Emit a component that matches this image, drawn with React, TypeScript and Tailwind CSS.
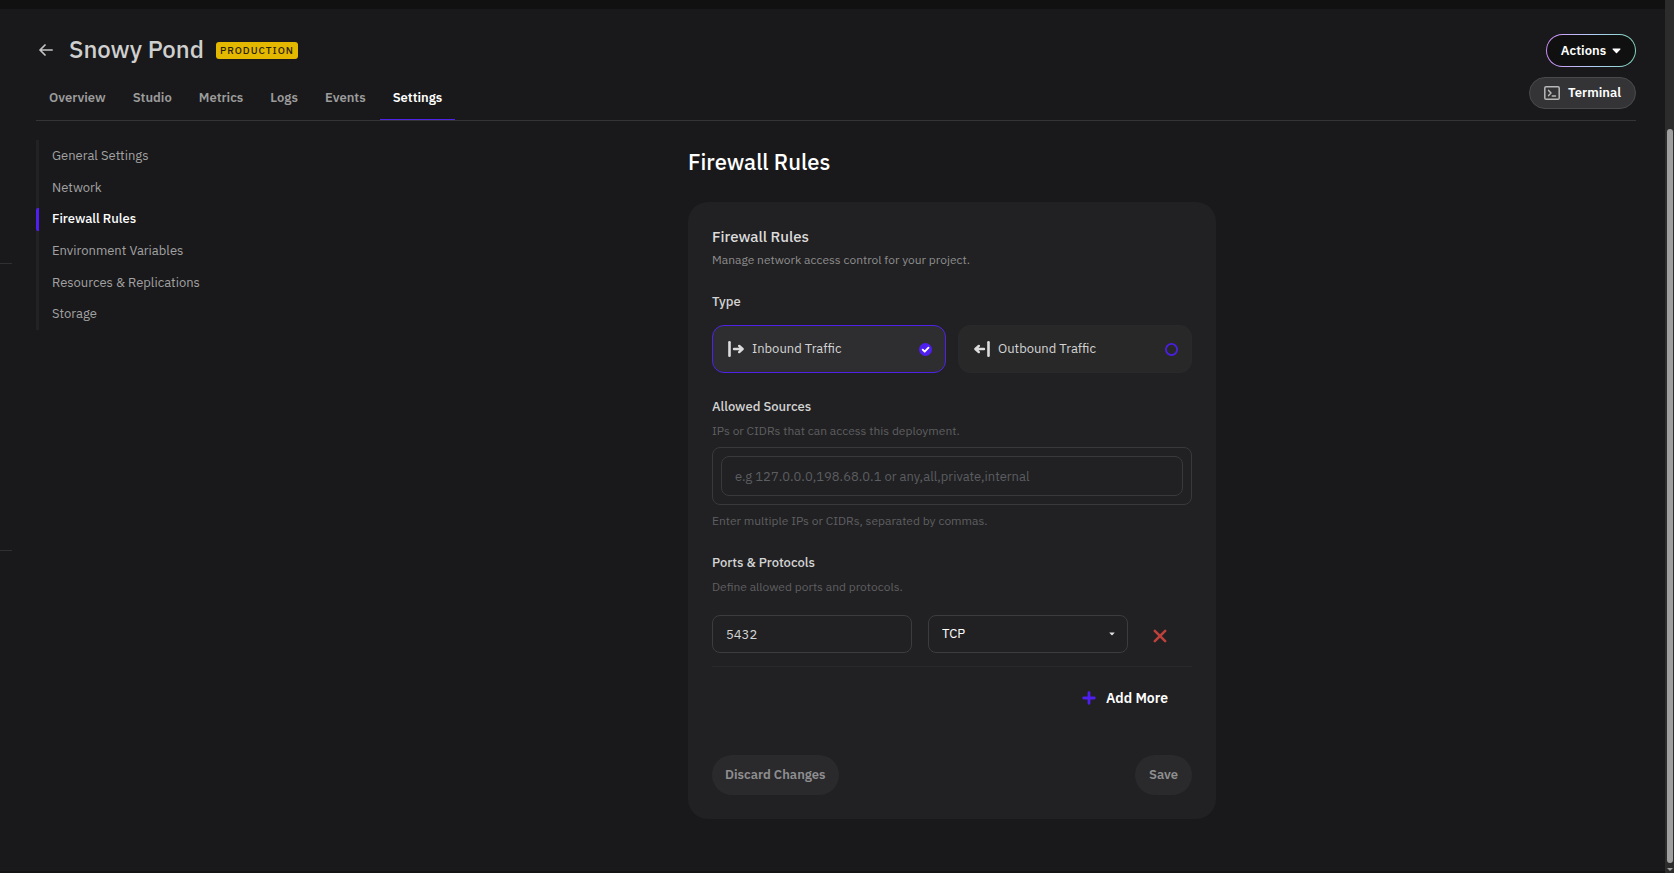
import { useState } from "react";

const tabs = ["Overview", "Studio", "Metrics", "Logs", "Events", "Settings"];
const sections = [
  "General Settings",
  "Network",
  "Firewall Rules",
  "Environment Variables",
  "Resources & Replications",
  "Storage",
];

function BackIcon() {
  return (
    <svg width="14" height="12" viewBox="0 0 14 12" fill="none" stroke="#c4c4c4" strokeWidth="1.7" strokeLinecap="round" strokeLinejoin="round">
      <path d="M13.2 6H1M6 1 1 6l5 5" />
    </svg>
  );
}

function TerminalIcon() {
  return (
    <svg width="16" height="14" viewBox="0 0 16 14" fill="none" stroke="#b8b8b8" strokeWidth="1.5" strokeLinecap="round" strokeLinejoin="round">
      <rect x="0.8" y="0.8" width="14.4" height="12.4" rx="1.3" />
      <path d="M4.6 4.4 7 7 4.6 9.6M8.3 10h3.2" />
    </svg>
  );
}

function InboundIcon() {
  return (
    <svg width="16" height="16" viewBox="0 0 16 16" fill="none" stroke="#dcdcdc" strokeLinecap="round" strokeLinejoin="round">
      <path d="M1.5 1.3v13.4" strokeWidth="2.6" />
      <path d="M6 8h8M11.2 4.9 14.6 8l-3.4 3.1" strokeWidth="2.4" />
    </svg>
  );
}

function OutboundIcon() {
  return (
    <svg width="16" height="16" viewBox="0 0 16 16" fill="none" stroke="#dcdcdc" strokeLinecap="round" strokeLinejoin="round">
      <path d="M14.5 1.3v13.4" strokeWidth="2.6" />
      <path d="M10 8H2M4.8 4.9 1.4 8l3.4 3.1" strokeWidth="2.4" />
    </svg>
  );
}

function RadioMark({ checked }: { checked: boolean }) {
  return checked ? (
    <svg width="13" height="13" viewBox="0 0 13 13">
      <circle cx="6.5" cy="6.5" r="6.5" fill="#4f1ef0" />
      <path d="m3.7 6.7 2 2 3.8-4" fill="none" stroke="#fff" strokeWidth="1.9" strokeLinecap="round" strokeLinejoin="round" />
    </svg>
  ) : (
    <svg width="13" height="13" viewBox="0 0 13 13">
      <circle cx="6.5" cy="6.5" r="5.6" fill="none" stroke="#4c1fe4" strokeWidth="1.8" />
    </svg>
  );
}

export default function App() {
  const [direction, setDirection] = useState("inbound");
  const [port, setPort] = useState("5432");

  const options = [
    { id: "inbound", label: "Inbound Traffic", icon: <InboundIcon /> },
    { id: "outbound", label: "Outbound Traffic", icon: <OutboundIcon /> },
  ];

  return (
    <div className="flex min-h-screen bg-[#19191b] font-['IBM_Plex_Sans','Roboto',sans-serif] text-[#d4d4d4]">
      <div className="flex min-w-0 flex-1 flex-col border-b-2 border-[#131313]">
        <div className="h-[9px] bg-[#111111]" />
        <div className="flex flex-1">
          <div className="w-3 shrink-0 pt-[254px]">
            <hr className="border-[#303032]" />
            <hr className="mt-[286px] border-[#303032]" />
          </div>

          <div className="flex-1 pr-[29px] pl-6">
            <header>
              <div className="flex items-center pt-[25px]">
                <a href="#back" aria-label="Back" className="ml-[3px] flex pb-0.5">
                  <BackIcon />
                </a>
                <h1 className="ml-4 pb-0.5 text-2xl leading-[31px] font-medium text-[#cfcfcf]">Snowy Pond</h1>
                <span className="ml-3 rounded-[3px] bg-[#e5b800] px-1 text-[10px] leading-[17px] font-medium tracking-[1px] text-[#2a2308]">
                  PRODUCTION
                </span>
                <div className="ml-auto rounded-full bg-linear-to-r from-[#d08cf8] via-[#b4cdf8] to-[#7fd6bd] p-px">
                  <button className="flex h-[31px] w-[88px] items-center justify-center gap-1.5 rounded-full bg-[#101011] text-[13px] font-semibold text-white">
                    Actions
                    <svg width="9" height="6" viewBox="0 0 9 6" fill="#fff">
                      <path d="M1.2.4h6.6c.6 0 .9.6.5 1L5 5c-.3.3-.7.3-1 0L.7 1.4C.3 1 .6.4 1.2.4Z" />
                    </svg>
                  </button>
                </div>
              </div>
              <div className="flex justify-between border-b border-[#343436] pt-2.5">
                <nav className="flex h-[43px] gap-px">
                  {tabs.map((tab) => (
                    <a
                      key={tab}
                      href={"#" + tab.toLowerCase()}
                      className={
                        tab === "Settings"
                          ? "border-b border-[#4f22e8] px-[13px] pt-[11px] text-[13px] leading-5 font-semibold text-white"
                          : "px-[13px] pt-[11px] text-[13px] leading-5 font-semibold text-[#9c9c9c]"
                      }
                    >
                      {tab}
                    </a>
                  ))}
                </nav>
                <button className="flex h-8 items-center gap-2 rounded-full border border-[#4a4a4c] bg-[#343436] px-[14px] text-[13px] font-semibold text-white">
                  <TerminalIcon />
                  Terminal
                </button>
              </div>
            </header>

            <div className="flex items-start pt-[19px]">
              <nav className="flex h-[190px] w-[232px] shrink-0 flex-col border-l-[3px] border-[#222224]">
                {sections.map((s) => (
                  <a
                    key={s}
                    href="#settings"
                    className={
                      s === "Firewall Rules"
                        ? "-ml-[3px] flex flex-1 items-center text-[13px] font-medium text-white"
                        : "-ml-[3px] flex flex-1 items-center text-[13px] text-[#a2a2a2]"
                    }
                  >
                    <span
                      className={
                        s === "Firewall Rules"
                          ? "flex h-[23px] items-center rounded-xs border-l-[3px] border-[#4f1ef0] pl-[13px]"
                          : "flex h-[23px] items-center pl-4"
                      }
                    >
                      {s}
                    </span>
                  </a>
                ))}
              </nav>

              <main className="flex flex-1 justify-center pb-12">
                <div className="w-full max-w-[528px]">
                  <h2 className="pt-1.5 text-[22px] leading-8 font-medium text-white">Firewall Rules</h2>
                  <form className="mt-6 rounded-[20px] bg-[#212123] p-6" onSubmit={(e) => e.preventDefault()}>
                    <h3 className="text-[15px] leading-[22px] font-medium text-[#dcdcdc]">Firewall Rules</h3>
                    <p className="mt-0.5 text-xs leading-5 text-[#8e8e8e]">Manage network access control for your project.</p>

                    <fieldset className="mt-[22px]">
                      <legend className="text-[13px] leading-5 font-medium">Type</legend>
                      <div className="mt-[13px] grid grid-cols-2 gap-3">
                        {options.map((o) => (
                          <label
                            key={o.id}
                            className={
                              direction === o.id
                                ? "flex h-12 cursor-pointer items-center rounded-xl border border-[#4f22e8] bg-[#2e2e30] pr-[13px] pl-[15px] text-[13px] leading-5"
                                : "flex h-12 cursor-pointer items-center rounded-xl border border-[#29292b] bg-[#282829] pr-[13px] pl-[15px] text-[13px] leading-5"
                            }
                          >
                            <input
                              type="radio"
                              name="direction"
                              className="sr-only"
                              checked={direction === o.id}
                              onChange={() => setDirection(o.id)}
                            />
                            {o.icon}
                            <span className="ml-2 flex-1">{o.label}</span>
                            <RadioMark checked={direction === o.id} />
                          </label>
                        ))}
                      </div>
                    </fieldset>

                    <label htmlFor="sources" className="mt-6 block text-[13px] leading-5 font-medium">
                      Allowed Sources
                    </label>
                    <p className="mt-1 text-xs leading-5 text-[#5f5f61]">IPs or CIDRs that can access this deployment.</p>
                    <div className="mt-1.5 rounded-lg border border-[#39393b] p-2">
                      <input
                        id="sources"
                        placeholder="e.g 127.0.0.0,198.68.0.1 or any,all,private,internal"
                        className="block h-10 w-full rounded-lg border border-[#39393b] bg-transparent px-[13px] text-[13px] outline-none placeholder:text-[#5b5d60]"
                      />
                    </div>
                    <p className="mt-1.5 text-xs leading-5 text-[#5f5f61]">Enter multiple IPs or CIDRs, separated by commas.</p>

                    <label htmlFor="port" className="mt-[22px] block text-[13px] leading-5 font-medium">
                      Ports &amp; Protocols
                    </label>
                    <p className="mt-1 text-xs leading-5 text-[#5f5f61]">Define allowed ports and protocols.</p>
                    <div className="mt-[18px] flex items-center border-b border-[#29292b] pb-[13px]">
                      <input
                        id="port"
                        value={port}
                        onChange={(e) => setPort(e.target.value)}
                        className="h-[38px] w-[200px] rounded-lg border border-[#3c3c3e] bg-transparent px-[13px] text-[13px] outline-none"
                      />
                      <div className="relative ml-4 w-[200px]">
                        <select
                          aria-label="Protocol"
                          className="h-[38px] w-full appearance-none rounded-lg border border-[#3c3c3e] bg-transparent px-[13px] text-[13px] leading-5 text-white outline-none"
                        >
                          <option>TCP</option>
                          <option>UDP</option>
                        </select>
                        <svg className="pointer-events-none absolute top-[17px] right-[13px]" width="6" height="4" viewBox="0 0 6 4" fill="#e0e0e0">
                          <path d="M.8.4h4.4c.3 0 .5.4.2.6L3.3 3.2a.4.4 0 0 1-.6 0L.6 1C.3.8.5.4.8.4Z" />
                        </svg>
                      </div>
                      <button type="button" aria-label="Remove port" className="mt-1 ml-[25px]">
                        <svg width="14" height="14" viewBox="0 0 14 14" stroke="#c0403c" strokeWidth="2.5" strokeLinecap="round">
                          <path d="m1.8 1.8 10.4 10.4M12.2 1.8 1.8 12.2" />
                        </svg>
                      </button>
                    </div>

                    <div className="flex justify-end pt-5 pr-6">
                      <button type="button" className="flex items-center gap-2.5 text-sm leading-[22px] font-semibold text-white">
                        <svg width="14" height="14" viewBox="0 0 14 14" stroke="#4f1ef0" strokeWidth="2.8" strokeLinecap="round">
                          <path d="M7 1.7v10.6M1.7 7h10.6" />
                        </svg>
                        Add More
                      </button>
                    </div>

                    <div className="flex justify-between pt-[46px]">
                      <button type="button" className="h-10 rounded-full bg-[#2a2a2c] px-[13px] text-[13px] font-semibold text-[#8f8f91]">
                        Discard Changes
                      </button>
                      <button type="submit" className="h-10 rounded-full bg-[#2a2a2c] px-[14px] text-[13px] font-semibold text-[#8f8f91]">
                        Save
                      </button>
                    </div>
                  </form>
                </div>
              </main>
            </div>
          </div>
        </div>
      </div>

      <div className="flex w-[9px] shrink-0 flex-col items-center gap-[5px] bg-[#2c2c2c] pt-[129px] pb-0.5" aria-hidden="true">
        <div className="w-1.5 flex-1 rounded-full bg-[#9f9f9f]" />
        <svg width="6" height="3" viewBox="0 0 6 3" fill="#9f9f9f">
          <path d="M0 0h6L3 3Z" />
        </svg>
      </div>
    </div>
  );
}
